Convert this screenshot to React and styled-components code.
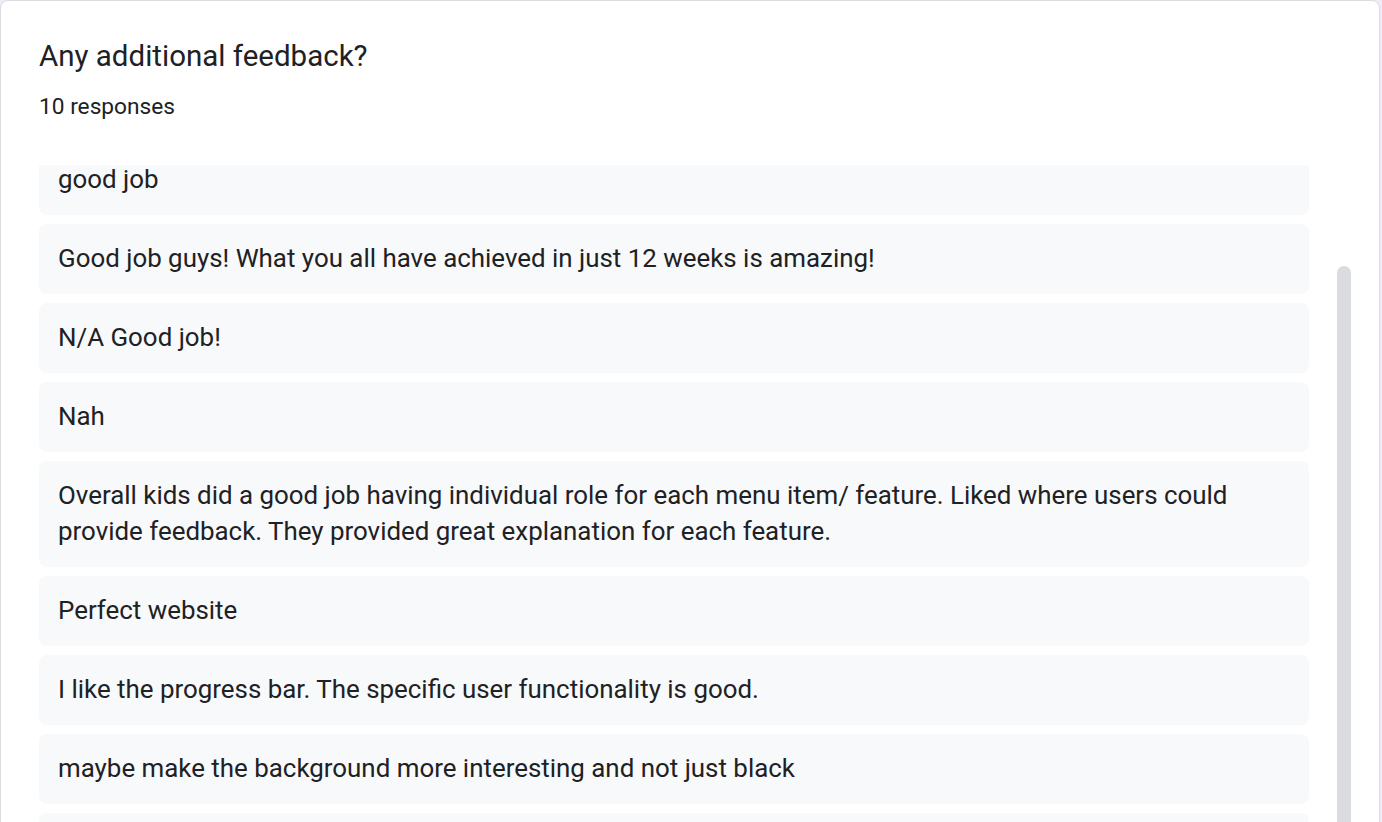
import styled, { createGlobalStyle } from 'styled-components';

const GlobalStyle = createGlobalStyle`
    html, body {
        margin: 0;
        height: 100%;
        overflow: hidden;
        background: #f0ebf8;
    }

    body {
        font-family: Roboto, "Noto Sans", Arial, sans-serif;
        color: #202124;
    }
`;

const Card = styled.section`
    box-sizing: border-box;
    width: 1380px;
    height: 1000px;
    background: #fff;
    border: 1px solid #dadce0;
    border-radius: 8px;
    padding: 37px 0 0 38px;
    display: flex;
    flex-direction: column;
`;

const Title = styled.h2`
    margin: 0;
    font-size: 29.5px;
    font-weight: 400;
    line-height: 36px;
    color: #202124;
`;

const Count = styled.p`
    margin: 18px 0 0;
    font-size: 22.7px;
    line-height: 30px;
    color: #202124;
`;

const ListArea = styled.div`
    margin-top: 43px;
    display: flex;
    flex: 1;
    min-height: 0;
    overflow: hidden;
`;

const List = styled.div`
    width: 1270px;
    margin-top: -20px;
    display: flex;
    flex-direction: column;
    gap: 9px;
`;

const Response = styled.div`
    min-height: 36px;
    background: #f8f9fa;
    border-radius: 8px;
    padding: 16px 19px 18px;
    font-size: 25.9px;
    line-height: 36px;
    color: #202124;
`;

const Track = styled.div`
    width: 14px;
    margin-left: 28px;
    display: flex;
    flex-direction: column;
`;

const Thumb = styled.div`
    margin-top: ${(p) => p.offset}px;
    height: 600px;
    background: #dadce0;
    border-radius: 7px;
`;

const responses = [
    'good job',
    'Good job guys! What you all have achieved in just 12 weeks is amazing!',
    'N/A Good job!',
    'Nah',
    'Overall kids did a good job having individual role for each menu item/ feature. Liked where users could provide feedback. They provided great explanation for each feature.',
    'Perfect website',
    'I like the progress bar. The specific user functionality is good.',
    'maybe make the background more interesting and not just black',
    '',
];

const App = () => (
    <>
        <GlobalStyle />
        <Card>
            <Title>Any additional feedback?</Title>
            <Count>10 responses</Count>
            <ListArea>
                <List>
                    {responses.map((text, i) => (
                        <Response key={i}>{text}</Response>
                    ))}
                </List>
                <Track>
                    <Thumb offset={101} />
                </Track>
            </ListArea>
        </Card>
    </>
);

export default App;
